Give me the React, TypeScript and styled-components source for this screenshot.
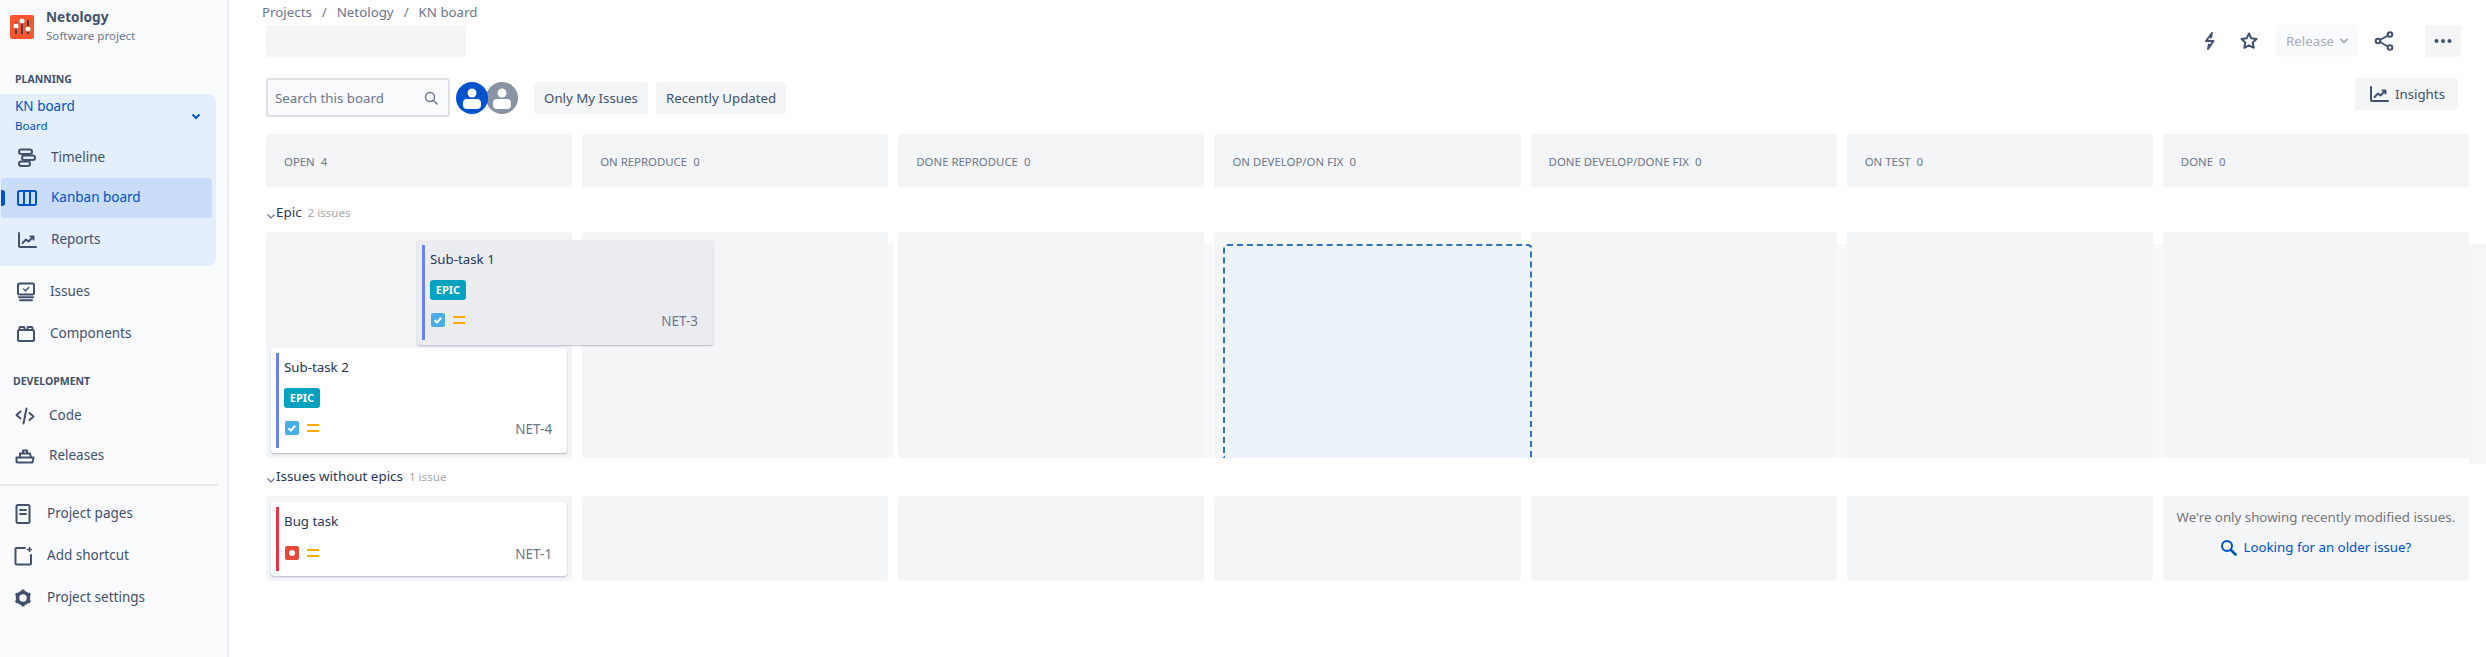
import React from "react";
import styled, { createGlobalStyle } from "styled-components";

const GlobalStyle = createGlobalStyle`
  html, body {
    margin: 0;
    padding: 0;
    background: #fff;
    overflow: hidden;
  }
  * {
    box-sizing: border-box;
  }
  body {
    font-family: "Noto Sans", "Liberation Sans", sans-serif;
    font-size: 13.3px;
    color: #172b4d;
  }
`;

const Page = styled.div`
  display: flex;
  width: 2486px;
  height: 657px;
  overflow: hidden;
`;

/* sidebar */

const SideBar = styled.nav`
  flex: 0 0 229px;
  background: #fafbfc;
  border-right: 2px solid #ebecf0;
  color: #42526e;
`;

const ProjectHeader = styled.div`
  display: flex;
  align-items: center;
  gap: 12px;
  height: 54px;
  padding-left: 10px;
`;

const ProjectText = styled.div`
  margin-top: -2px;
`;

const ProjectName = styled.div`
  font-weight: 700;
  font-size: 13.6px;
  line-height: 19px;
  color: #42526e;
`;

const ProjectType = styled.div`
  font-size: 11.6px;
  line-height: 19px;
  color: #6b778c;
`;

const SectionLabel = styled.div<{ $pad: number; $top: number }>`
  height: 20px;
  line-height: 20px;
  margin: ${(p) => p.$top}px 0 5px;
  padding-left: ${(p) => p.$pad}px;
  font-size: 10.5px;
  font-weight: 700;
  color: #42526e;
`;

const PlanningGroup = styled.div`
  width: 216px;
  height: 172px;
  background: #e4eefc;
  border-radius: 0 8px 8px 0;
  margin-bottom: 6px;
`;

const BoardSwitcher = styled.div`
  display: flex;
  align-items: center;
  justify-content: space-between;
  height: 44px;
  padding: 0 14px 0 15px;
  color: #0052cc;
`;

const BoardName = styled.div`
  font-size: 13.5px;
  line-height: 19px;
`;

const BoardKind = styled.div`
  font-size: 11.6px;
  line-height: 19px;
`;

const NavItem = styled.div<{ $pad: number; $active?: boolean; $gapBelow?: number }>`
  position: relative;
  display: flex;
  align-items: center;
  gap: 14px;
  height: 40px;
  padding-left: ${(p) => p.$pad}px;
  margin-bottom: ${(p) => p.$gapBelow ?? 0}px;
  font-size: 13.5px;
  color: ${(p) => (p.$active ? "#0052cc" : "#42526e")};
  ${(p) =>
    p.$active &&
    `
    width: 211px;
    margin-left: 1px;
    background: #c9dcf9;
    border-radius: 4px;
    &::before {
      content: "";
      position: absolute;
      left: 0;
      top: 12px;
      width: 4px;
      height: 16px;
      background: #0052cc;
      border-radius: 0 3px 3px 0;
    }
  `}
`;

const NavLabel = styled.span`
  margin-top: -2px;
`;

const NavIcon = styled.svg`
  flex: 0 0 20px;
  width: 20px;
  height: 20px;
  fill: none;
  stroke: currentColor;
  stroke-width: 2;
  stroke-linecap: round;
  stroke-linejoin: round;
`;

const SideDivider = styled.div`
  width: 218px;
  height: 2px;
  margin: 8px 0;
  background: #e6e8ea;
`;

/* main area */

const Main = styled.main`
  flex: 1;
  min-width: 0;
  padding: 0 17px 0 37px;
`;

const Breadcrumbs = styled.div`
  display: flex;
  gap: 10px;
  height: 25px;
  margin-left: -4px;
  line-height: 25px;
  color: #6b778c;
`;

const TitleRow = styled.div`
  display: flex;
  justify-content: space-between;
  height: 32px;
`;

const TitlePlaceholder = styled.div`
  width: 200px;
  background: #f4f5f7;
  border-radius: 3px;
`;

const Actions = styled.div`
  display: flex;
  align-items: center;
  padding-right: 8px;
  color: #42526e;
`;

const ActionIcon = styled.svg<{ $right: number }>`
  width: 20px;
  height: 20px;
  margin-right: ${(p) => p.$right}px;
  fill: none;
  stroke: currentColor;
  stroke-width: 2;
  stroke-linecap: round;
  stroke-linejoin: round;
`;

const ReleaseButton = styled.div`
  display: flex;
  align-items: center;
  gap: 5px;
  width: 81px;
  height: 32px;
  margin-right: 17px;
  padding-left: 10px;
  background: #f9fafb;
  border-radius: 3px;
  color: #a5adba;
`;

const MoreButton = styled.div`
  display: flex;
  align-items: center;
  justify-content: center;
  width: 36px;
  height: 32px;
  background: #f4f5f7;
  border-radius: 3px;
`;

const Toolbar = styled.div`
  display: flex;
  align-items: center;
  height: 39px;
  margin-top: 21px;
`;

const SearchBox = styled.div`
  display: flex;
  align-items: center;
  justify-content: space-between;
  width: 184px;
  height: 39px;
  padding: 0 10px 0 7px;
  background: #fafbfc;
  border: 2px solid #dfe1e6;
  border-radius: 3px;
  color: #6b778c;
`;

const Avatars = styled.div`
  display: flex;
  margin: 0 16px 0 6px;
`;

const Avatar = styled.svg<{ $back?: boolean }>`
  width: 32px;
  height: 32px;
  ${(p) => (p.$back ? "margin-left: -2px;" : "position: relative; z-index: 1;")}
`;

const FilterButton = styled.div`
  display: flex;
  align-items: center;
  height: 32px;
  margin-right: 8px;
  padding: 0 10px;
  background: #f4f5f7;
  border-radius: 3px;
  color: #42526e;
`;

const InsightsButton = styled(FilterButton)`
  gap: 6px;
  align-self: flex-start;
  margin: 0 11px 0 auto;
  padding: 0 13px 0 14px;
`;

/* board */

const Columns = styled.div<{ $height: number }>`
  position: relative;
  display: grid;
  grid-template-columns: repeat(7, 1fr);
  gap: 10px;
  height: ${(p) => p.$height}px;
`;

const HeaderRow = styled(Columns)`
  margin: 17px 0 7px;
`;

const ColumnHead = styled.div`
  padding: 19px 0 0 18px;
  background: #f4f5f7;
  border-radius: 4px 4px 0 0;
  font-size: 11.4px;
  line-height: 17px;
  color: #6b778c;
  text-transform: uppercase;
`;

const HeadCount = styled.span`
  margin-left: 6px;
`;

const LaneHeader = styled.div`
  display: flex;
  align-items: center;
  height: 38px;
  padding-bottom: 2px;
  font-size: 13.4px;
  color: #253858;
`;

const LaneChevron = styled.svg`
  width: 10px;
  height: 10px;
  margin-top: 7px;
  fill: none;
  stroke: #6b778c;
  stroke-width: 1.2;
`;

const LaneCount = styled.span`
  margin-left: 6px;
  font-size: 11.6px;
  color: #a9a9a9;
`;

const Column = styled.div<{ $center?: boolean; $lifted?: boolean }>`
  position: relative;
  display: flex;
  flex-direction: column;
  justify-content: flex-end;
  padding: 5px;
  background: #f4f5f7;
  border-radius: 4px;
  z-index: ${(p) => (p.$lifted ? 3 : 1)};
  ${(p) =>
    p.$center &&
    `
    justify-content: flex-start;
    align-items: center;
    padding-top: 11px;
  `}
`;

/* drop targets of the drag in progress: one per column, drifting right of the grid */
const DropZone = styled.div<{ $slot: number; $active?: boolean }>`
  position: absolute;
  left: ${(p) => p.$slot * 319}px;
  top: 12px;
  bottom: 0;
  width: 309px;
  background: #f7f8f9;
  ${(p) =>
    p.$active &&
    `
    background: #ebf2f9;
    border: 2px dashed #2f73b8;
    border-bottom: none;
    border-radius: 4px 4px 0 0;
    z-index: 2;
  `}
`;

const DropZoneTail = styled.div`
  position: absolute;
  right: -17px;
  top: 12px;
  bottom: -6px;
  width: 17px;
  background: #f5f6f8;
`;

const Card = styled.div<{ $ghost?: boolean; $tall?: boolean }>`
  display: flex;
  gap: 5px;
  height: ${(p) => (p.$tall ? 105 : 74)}px;
  padding: 5px;
  background: ${(p) => (p.$ghost ? "#ebecf0" : "#fff")};
  border-radius: 3px;
  box-shadow: 0 1px 2px rgba(9, 30, 66, 0.28);
  ${(p) =>
    p.$ghost &&
    `
    position: absolute;
    left: 151px;
    top: 8px;
    width: 296px;
    z-index: 3;
  `}
`;

const Stripe = styled.div<{ $color: string }>`
  flex: 0 0 3px;
  background: ${(p) => p.$color};
`;

const CardBody = styled.div`
  flex: 1;
  min-width: 0;
  padding-right: 10px;
`;

const CardTitle = styled.div`
  margin-top: 4px;
  margin-bottom: 1px;
  line-height: 20px;
  color: #253858;
`;

const EpicLabel = styled.div`
  display: flex;
  align-items: center;
  justify-content: center;
  width: 36px;
  height: 20px;
  margin: 11px 0 -2px;
  padding-bottom: 1px;
  background: #00a3bf;
  border-radius: 3px;
  font-size: 11px;
  font-weight: 700;
  color: #fff;
`;

const CardFooter = styled.div`
  display: flex;
  align-items: center;
  height: 20px;
  margin-top: 12px;
`;

const IssueKey = styled.span`
  margin-left: auto;
  padding-top: 2px;
  font-size: 13.5px;
  color: #6b778c;
`;

const TypeIcon = styled.svg`
  width: 16px;
  height: 16px;
`;

const PriorityIcon = styled.svg`
  width: 14px;
  height: 16px;
  margin-left: 6px;
`;

const OlderNote = styled.div`
  line-height: 20px;
  white-space: nowrap;
  color: #777;
`;

const OlderLink = styled.div`
  display: flex;
  align-items: center;
  gap: 6px;
  margin-top: 10px;
  line-height: 20px;
  color: #0052cc;
`;

const LinkIcon = styled.svg`
  width: 17px;
  height: 17px;
  fill: none;
  stroke: #0052cc;
  stroke-width: 2;
  stroke-linecap: round;
`;

const columnTitles: [string, number][] = [
  ["Open", 4],
  ["On reproduce", 0],
  ["Done reproduce", 0],
  ["On develop/on fix", 0],
  ["Done develop/done fix", 0],
  ["On test", 0],
  ["Done", 0],
];

const dropSlots = [1, 2, 3, 4, 5, 6];

const TrendPaths = () => (
  <>
    <path d="M2 3v13a1 1 0 0 0 1 1h16" />
    <path d="M5.5 13l3.5-3.5 2.5 2L16 7" />
    <path d="M13.5 6.5H16.500V9.500" />
  </>
);

const StoryIcon = () => (
  <TypeIcon viewBox="0 0 16 16">
    <rect x="1" y="1" width="14" height="14" rx="2" fill="#4bade8" />
    <path d="M4.500 8.200l2.400 2.300 4.300-4.700" fill="none" stroke="#fff" strokeWidth="2" />
  </TypeIcon>
);

const BugIcon = () => (
  <TypeIcon viewBox="0 0 16 16">
    <rect x="1" y="1" width="14" height="14" rx="2" fill="#e5493a" />
    <circle cx="8" cy="8" r="3" fill="#fff" />
  </TypeIcon>
);

const MediumPriority = () => (
  <PriorityIcon viewBox="0 0 14 16">
    <path d="M1 5h12M1 11h12" stroke="#ffab00" strokeWidth="2" />
  </PriorityIcon>
);

const Chevron = () => (
  <LaneChevron viewBox="0 0 10 10">
    <path d="M1.500 3.500L5 7l3.500-3.500" />
  </LaneChevron>
);

const PersonAvatar: React.FC<{ color: string; back?: boolean }> = ({ color, back }) => (
  <Avatar viewBox="0 0 32 32" $back={back}>
    <circle cx="16" cy="16" r="16" fill={color} />
    <circle cx="16" cy="11" r="4.500" fill="#fff" />
    <rect x="7" y="17" width="18" height="10" rx="4" fill="#fff" />
  </Avatar>
);

const SubTaskCard: React.FC<{ title: string; issueKey: string; ghost?: boolean }> = ({
  title,
  issueKey,
  ghost,
}) => (
  <Card $tall $ghost={ghost}>
    <Stripe $color="#6b81f5" />
    <CardBody>
      <CardTitle>{title}</CardTitle>
      <EpicLabel>EPIC</EpicLabel>
      <CardFooter>
        <StoryIcon />
        <MediumPriority />
        <IssueKey>{issueKey}</IssueKey>
      </CardFooter>
    </CardBody>
  </Card>
);

const App: React.FC = () => {
  return (
    <Page>
      <GlobalStyle />
      <SideBar>
        <ProjectHeader>
          <svg width="24" height="24" viewBox="0 0 24 24">
            <rect width="24" height="24" rx="2" fill="#ff5630" />
            <path d="M6 7v12M12 4v15M18 5v14" stroke="#253858" strokeWidth="1.600" />
            <circle cx="6" cy="11" r="2.500" fill="#fff" />
            <circle cx="12" cy="6" r="2.500" fill="#fff" />
            <circle cx="18" cy="14" r="2.500" fill="#fff" />
          </svg>
          <ProjectText>
            <ProjectName>Netology</ProjectName>
            <ProjectType>Software project</ProjectType>
          </ProjectText>
        </ProjectHeader>
        <SectionLabel $pad={15} $top={15}>PLANNING</SectionLabel>
        <PlanningGroup>
          <BoardSwitcher>
            <div>
              <BoardName>KN board</BoardName>
              <BoardKind>Board</BoardKind>
            </div>
            <svg width="12" height="12" viewBox="0 0 12 12" fill="none">
              <path d="M2.500 4.500L6 8l3.500-3.500" stroke="#0052cc" strokeWidth="2" />
            </svg>
          </BoardSwitcher>
          <NavItem $pad={17}>
            <NavIcon viewBox="0 0 20 20">
              <rect x="2" y="1.500" width="13" height="4.500" rx="2.250" />
              <rect x="5" y="7.500" width="13" height="4.500" rx="2.250" />
              <rect x="2" y="13.500" width="11" height="4.500" rx="2.250" />
            </NavIcon>
            <NavLabel>Timeline</NavLabel>
          </NavItem>
          <NavItem $pad={16} $active $gapBelow={2}>
            <NavIcon viewBox="0 0 20 20">
              <rect x="1" y="3" width="18" height="14" rx="1.500" />
              <path d="M7 3v14M13 3v14" strokeLinecap="butt" />
            </NavIcon>
            <NavLabel>Kanban board</NavLabel>
          </NavItem>
          <NavItem $pad={17}>
            <NavIcon viewBox="0 0 20 20"><TrendPaths /></NavIcon>
            <NavLabel>Reports</NavLabel>
          </NavItem>
        </PlanningGroup>
        <NavItem $pad={16} $gapBelow={2}>
          <NavIcon viewBox="0 0 20 20">
            <rect x="2" y="1.500" width="16" height="11" rx="1.500" />
            <path d="M7.500 7l2 1.800 3.300-3.300" strokeWidth="1.500" />
            <path d="M3 15.300h14M4 18.300h12" />
          </NavIcon>
          <NavLabel>Issues</NavLabel>
        </NavItem>
        <NavItem $pad={16}>
          <NavIcon viewBox="0 0 20 20">
            <rect x="2" y="6" width="16" height="11" rx="1.500" />
            <path d="M3.500 6V4a1 1 0 0 1 1-1h3a1 1 0 0 1 1 1v2M11.500 6V4a1 1 0 0 1 1-1h3a1 1 0 0 1 1 1v2" />
          </NavIcon>
          <NavLabel>Components</NavLabel>
        </NavItem>
        <SectionLabel $pad={13} $top={17}>DEVELOPMENT</SectionLabel>
        <NavItem $pad={15}>
          <NavIcon viewBox="0 0 20 20">
            <path d="M5.500 5.500L1.500 9l4 3.500M14.500 7l4 3.500-4 3.500M11.500 2.500L8.500 17.500" />
          </NavIcon>
          <NavLabel>Code</NavLabel>
        </NavItem>
        <NavItem $pad={15}>
          <NavIcon viewBox="0 0 20 20">
            <path d="M1.500 11.500h17l-1 5h-15a1 1 0 0 1-1-1z" />
            <path d="M5 11.500V7.500h10l1 4M8 7.500V4.500h4v3" />
          </NavIcon>
          <NavLabel>Releases</NavLabel>
        </NavItem>
        <SideDivider />
        <NavItem $pad={13} $gapBelow={2}>
          <NavIcon viewBox="0 0 20 20">
            <rect x="3.500" y="1" width="13" height="18" rx="1.500" />
            <path d="M7 6h6M7 10h6" />
          </NavIcon>
          <NavLabel>Project pages</NavLabel>
        </NavItem>
        <NavItem $pad={13} $gapBelow={2}>
          <NavIcon viewBox="0 0 20 20">
            <path d="M12 2H3.500a1 1 0 0 0-1 1v14.500a1 1 0 0 0 1 1H17a1 1 0 0 0 1-1V9" />
            <path d="M16.500 1.500v4M14.500 3.500h4" strokeWidth="1.600" />
          </NavIcon>
          <NavLabel>Add shortcut</NavLabel>
        </NavItem>
        <NavItem $pad={13}>
          <NavIcon viewBox="0 0 20 20">
            <circle cx="10" cy="10" r="5.500" strokeWidth="3.600" />
            <path
              d="M10 1.500v3M10 15.500v3M2.600 5.700l2.600 1.500M14.800 12.800l2.600 1.500M2.600 14.300l2.600-1.500M14.800 7.200l2.600-1.500"
              strokeWidth="3"
              strokeLinecap="butt"
            />
          </NavIcon>
          <NavLabel>Project settings</NavLabel>
        </NavItem>
      </SideBar>

      <Main>
        <Breadcrumbs>
          <span>Projects</span>
          <span>/</span>
          <span>Netology</span>
          <span>/</span>
          <span>KN board</span>
        </Breadcrumbs>
        <TitleRow>
          <TitlePlaceholder />
          <Actions>
            <ActionIcon viewBox="0 0 20 20" $right={19}>
              <path d="M12 2L6 10h7.500L8 18M12 2l-1 4.500M8 18l1-4.500" />
            </ActionIcon>
            <ActionIcon viewBox="0 0 20 20" $right={17}>
              <path d="M10 2.500l2.300 4.800 5.200.7-3.800 3.600 1 5.200-4.700-2.500-4.700 2.500 1-5.200L2.500 8l5.200-.7z" />
            </ActionIcon>
            <ReleaseButton>
              Release
              <svg width="10" height="10" viewBox="0 0 10 10" fill="none">
                <path d="M1.500 3L5 6.500 8.500 3" stroke="#a5adba" strokeWidth="1.800" />
              </svg>
            </ReleaseButton>
            <ActionIcon viewBox="0 0 20 20" $right={31}>
              <circle cx="4" cy="10" r="2.300" />
              <circle cx="16" cy="3.500" r="2.300" />
              <circle cx="16" cy="16.500" r="2.300" />
              <path d="M6 9l8-4.500M6 11l8 4.500" />
            </ActionIcon>
            <MoreButton>
              <svg width="18" height="6" viewBox="0 0 18 6" fill="#42526e">
                <circle cx="2.500" cy="3" r="2" />
                <circle cx="9" cy="3" r="2" />
                <circle cx="15.500" cy="3" r="2" />
              </svg>
            </MoreButton>
          </Actions>
        </TitleRow>

        <Toolbar>
          <SearchBox>
            Search this board
            <svg width="14" height="14" viewBox="0 0 14 14" fill="none" stroke="#6b778c" strokeWidth="1.500">
              <circle cx="6" cy="6" r="4.500" />
              <path d="M9.500 9.500L13 13" strokeLinecap="round" />
            </svg>
          </SearchBox>
          <Avatars>
            <PersonAvatar color="#0052cc" />
            <PersonAvatar color="#8993a4" back />
          </Avatars>
          <FilterButton>Only My Issues</FilterButton>
          <FilterButton>Recently Updated</FilterButton>
          <InsightsButton>
            <NavIcon viewBox="0 0 20 20"><TrendPaths /></NavIcon>
            Insights
          </InsightsButton>
        </Toolbar>

        <HeaderRow $height={53}>
          {columnTitles.map(([title, count]) => (
            <ColumnHead key={title}>
              {title}
              <HeadCount>{count}</HeadCount>
            </ColumnHead>
          ))}
        </HeaderRow>

        <LaneHeader>
          <Chevron />
          Epic
          <LaneCount>2 issues</LaneCount>
        </LaneHeader>
        <Columns $height={226}>
          {dropSlots.map((slot) => (
            <DropZone key={slot} $slot={slot} $active={slot === 3} />
          ))}
          <DropZoneTail />
          <Column $lifted>
            <SubTaskCard ghost title="Sub-task 1" issueKey="NET-3" />
            <SubTaskCard title="Sub-task 2" issueKey="NET-4" />
          </Column>
          {columnTitles.slice(1).map(([title]) => (
            <Column key={title} />
          ))}
        </Columns>

        <LaneHeader>
          <Chevron />
          Issues without epics
          <LaneCount>1 issue</LaneCount>
        </LaneHeader>
        <Columns $height={85}>
          <Column>
            <Card>
              <Stripe $color="#e5344a" />
              <CardBody>
                <CardTitle>Bug task</CardTitle>
                <CardFooter>
                  <BugIcon />
                  <MediumPriority />
                  <IssueKey>NET-1</IssueKey>
                </CardFooter>
              </CardBody>
            </Card>
          </Column>
          {columnTitles.slice(1, 6).map(([title]) => (
            <Column key={title} />
          ))}
          <Column $center>
            <OlderNote>We're only showing recently modified issues.</OlderNote>
            <OlderLink>
              <LinkIcon viewBox="0 0 17 17">
                <circle cx="7" cy="7" r="5" />
                <path d="M11 11l4.500 4.500" strokeWidth="2.600" />
              </LinkIcon>
              Looking for an older issue?
            </OlderLink>
          </Column>
        </Columns>
      </Main>
    </Page>
  );
};

export default App;
